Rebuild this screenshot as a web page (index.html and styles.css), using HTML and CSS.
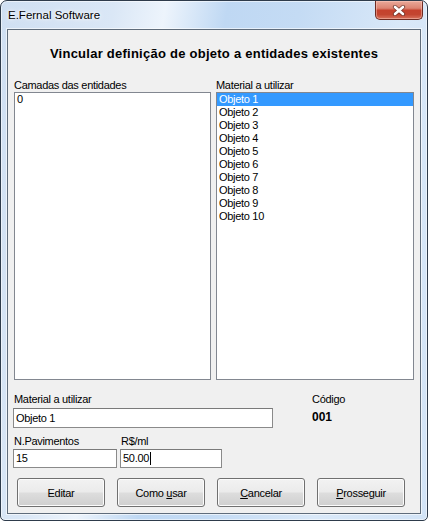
FILE: index.html
```html
<!DOCTYPE html>
<html lang="pt">
<head>
<meta charset="utf-8">
<title>E.Fernal Software</title>
<link rel="stylesheet" href="styles.css">
</head>
<body>
<div class="window">
  <div class="titlebar">
    <span class="title">E.Fernal Software</span>
    <div class="close">
      <svg width="14" height="11" viewBox="0 0 14 11">
        <path d="M3 2 L11 9 M11 2 L3 9" stroke="#5a2a22" stroke-width="4.2" stroke-linecap="round" fill="none" opacity="0.75"/>
        <path d="M3 2 L11 9 M11 2 L3 9" stroke="#ffffff" stroke-width="2.6" stroke-linecap="round" fill="none"/>
      </svg>
    </div>
  </div>
  <div class="client">
    <h1 class="heading">Vincular definição de objeto a entidades existentes</h1>
    <div class="lists">
      <div class="col">
        <div class="label">Camadas das entidades</div>
        <div class="listbox">
          <div class="item">0</div>
        </div>
      </div>
      <div class="col">
        <div class="label">Material a utilizar</div>
        <div class="listbox">
          <div class="item selected">Objeto 1</div>
          <div class="item">Objeto 2</div>
          <div class="item">Objeto 3</div>
          <div class="item">Objeto 4</div>
          <div class="item">Objeto 5</div>
          <div class="item">Objeto 6</div>
          <div class="item">Objeto 7</div>
          <div class="item">Objeto 8</div>
          <div class="item">Objeto 9</div>
          <div class="item">Objeto 10</div>
        </div>
      </div>
    </div>
    <div class="form">
      <div class="row row-a">
        <div class="field f-material">
          <div class="label">Material a utilizar</div>
          <div class="textbox tb-tall">Objeto 1</div>
        </div>
        <div class="code">
          <div class="label">Código</div>
          <div class="code-value">001</div>
        </div>
      </div>
      <div class="row row-b">
        <div class="field f-pav">
          <div class="label">N.Pavimentos</div>
          <div class="textbox tb-short">15</div>
        </div>
        <div class="field f-price">
          <div class="label">R$/ml</div>
          <div class="textbox tb-short">50.00<span class="caret"></span></div>
        </div>
      </div>
      <div class="buttons">
        <div class="btn"><span>Editar</span></div>
        <div class="btn"><span>Como <u>u</u>sar</span></div>
        <div class="btn"><span><u>C</u>ancelar</span></div>
        <div class="btn"><span><u>P</u>rosseguir</span></div>
      </div>
    </div>
  </div>
</div>
</body>
</html>
```
FILE: styles.css
```css
html, body {
  margin: 0;
  padding: 0;
  background: #ffffff;
}

body {
  font-family: "Liberation Sans", Arial, sans-serif;
  color: #000;
}

.window {
  width: 428px;
  height: 521px;
  box-sizing: border-box;
  border: 1px solid #2e3b4b;
  border-radius: 7px 7px 5px 5px;
  background: linear-gradient(100deg, #cfdff2 0%, #dae7f6 22%, #edf4fc 32%, #bfd8f3 44%, #c4dbf4 58%, #d9e8f8 78%, #d2e3f6 100%);
  box-shadow: inset 0 0 0 1px rgba(255, 255, 255, 0.55);
  display: flex;
  flex-direction: column;
  overflow: hidden;
}

.titlebar {
  height: 28px;
  display: flex;
  justify-content: space-between;
  align-items: flex-start;
  padding: 0 4px 0 7px;
}

.title {
  margin-top: 7px;
  font-size: 11.5px;
  line-height: 14px;
  color: #000;
  text-shadow: 0 0 6px #ffffff, 0 0 3px #ffffff;
}

.close {
  width: 48px;
  height: 19px;
  box-sizing: border-box;
  border: 1px solid #6e2b22;
  border-top: none;
  border-radius: 0 0 5px 5px;
  background: linear-gradient(#eaa99a 0%, #dc8472 40%, #c5412d 52%, #c34530 75%, #d8725d 100%);
  box-shadow: inset 0 0 0 1px rgba(255, 210, 200, 0.45);
  display: flex;
  align-items: center;
  justify-content: center;
}

.close svg {
  display: block;
}

.client {
  margin: 0 6px 6px;
  height: 485px;
  box-sizing: border-box;
  border: 1px solid #5f6c7b;
  background: #f0f0f0;
  box-shadow: 0 0 0 1px rgba(255, 255, 255, 0.6);
  padding: 0 6px;
}

.heading {
  margin: 16px 0 0;
  font-size: 13px;
  font-weight: bold;
  line-height: 16px;
  letter-spacing: 0.25px;
  text-align: center;
}

.lists {
  display: grid;
  grid-template-columns: 197px 198px;
  column-gap: 5px;
  margin-top: 16px;
}

.label {
  font-size: 11px;
  line-height: 14px;
  letter-spacing: -0.3px;
  white-space: nowrap;
}

.listbox {
  height: 288px;
  box-sizing: border-box;
  border: 1px solid #828790;
  background: #ffffff;
}

.item {
  font-size: 11px;
  line-height: 13px;
  height: 13px;
  letter-spacing: -0.3px;
  padding: 0 2px;
  white-space: nowrap;
}

.item.selected {
  background: #3399ff;
  color: #ffffff;
}

.form {
  margin-top: 12px;
  margin-left: -1px;
}

.row {
  display: flex;
  align-items: flex-start;
}

.field .label {
  padding-left: 1px;
}

.f-material {
  width: 260px;
}

.textbox {
  box-sizing: border-box;
  border: 1px solid #8a8a8a;
  border-top-color: #7a7a7a;
  background: #ffffff;
  font-size: 11px;
  letter-spacing: -0.3px;
  padding-left: 2px;
  white-space: nowrap;
}

.tb-tall {
  margin-top: 2px;
  height: 20px;
  line-height: 18px;
}

.tb-short {
  margin-top: 1px;
  height: 19px;
  line-height: 17px;
}

.caret {
  display: inline-block;
  width: 1px;
  height: 13px;
  background: #000;
  vertical-align: -3px;
  margin-left: 0.5px;
}

.code {
  margin-left: 39px;
}

.code-value {
  margin-top: 4px;
  font-size: 12px;
  font-weight: bold;
  line-height: 14px;
}

.row-b {
  margin-top: 6px;
}

.f-pav {
  width: 104px;
}

.f-price {
  width: 102px;
  margin-left: 3px;
}

.buttons {
  display: flex;
  gap: 12px;
  margin-top: 10px;
  padding-left: 4px;
}

.btn {
  width: 88px;
  height: 29px;
  box-sizing: border-box;
  border: 1px solid #707070;
  border-radius: 3px;
  background: linear-gradient(#f2f2f2 0%, #ebebeb 48%, #dddddd 52%, #cfcfcf 100%);
  box-shadow: inset 0 0 0 1px #fcfcfc;
  font-size: 11px;
  letter-spacing: -0.3px;
  display: flex;
  align-items: center;
  justify-content: center;
  white-space: nowrap;
}

.btn u {
  text-decoration: underline;
  text-underline-offset: 1px;
}
```
